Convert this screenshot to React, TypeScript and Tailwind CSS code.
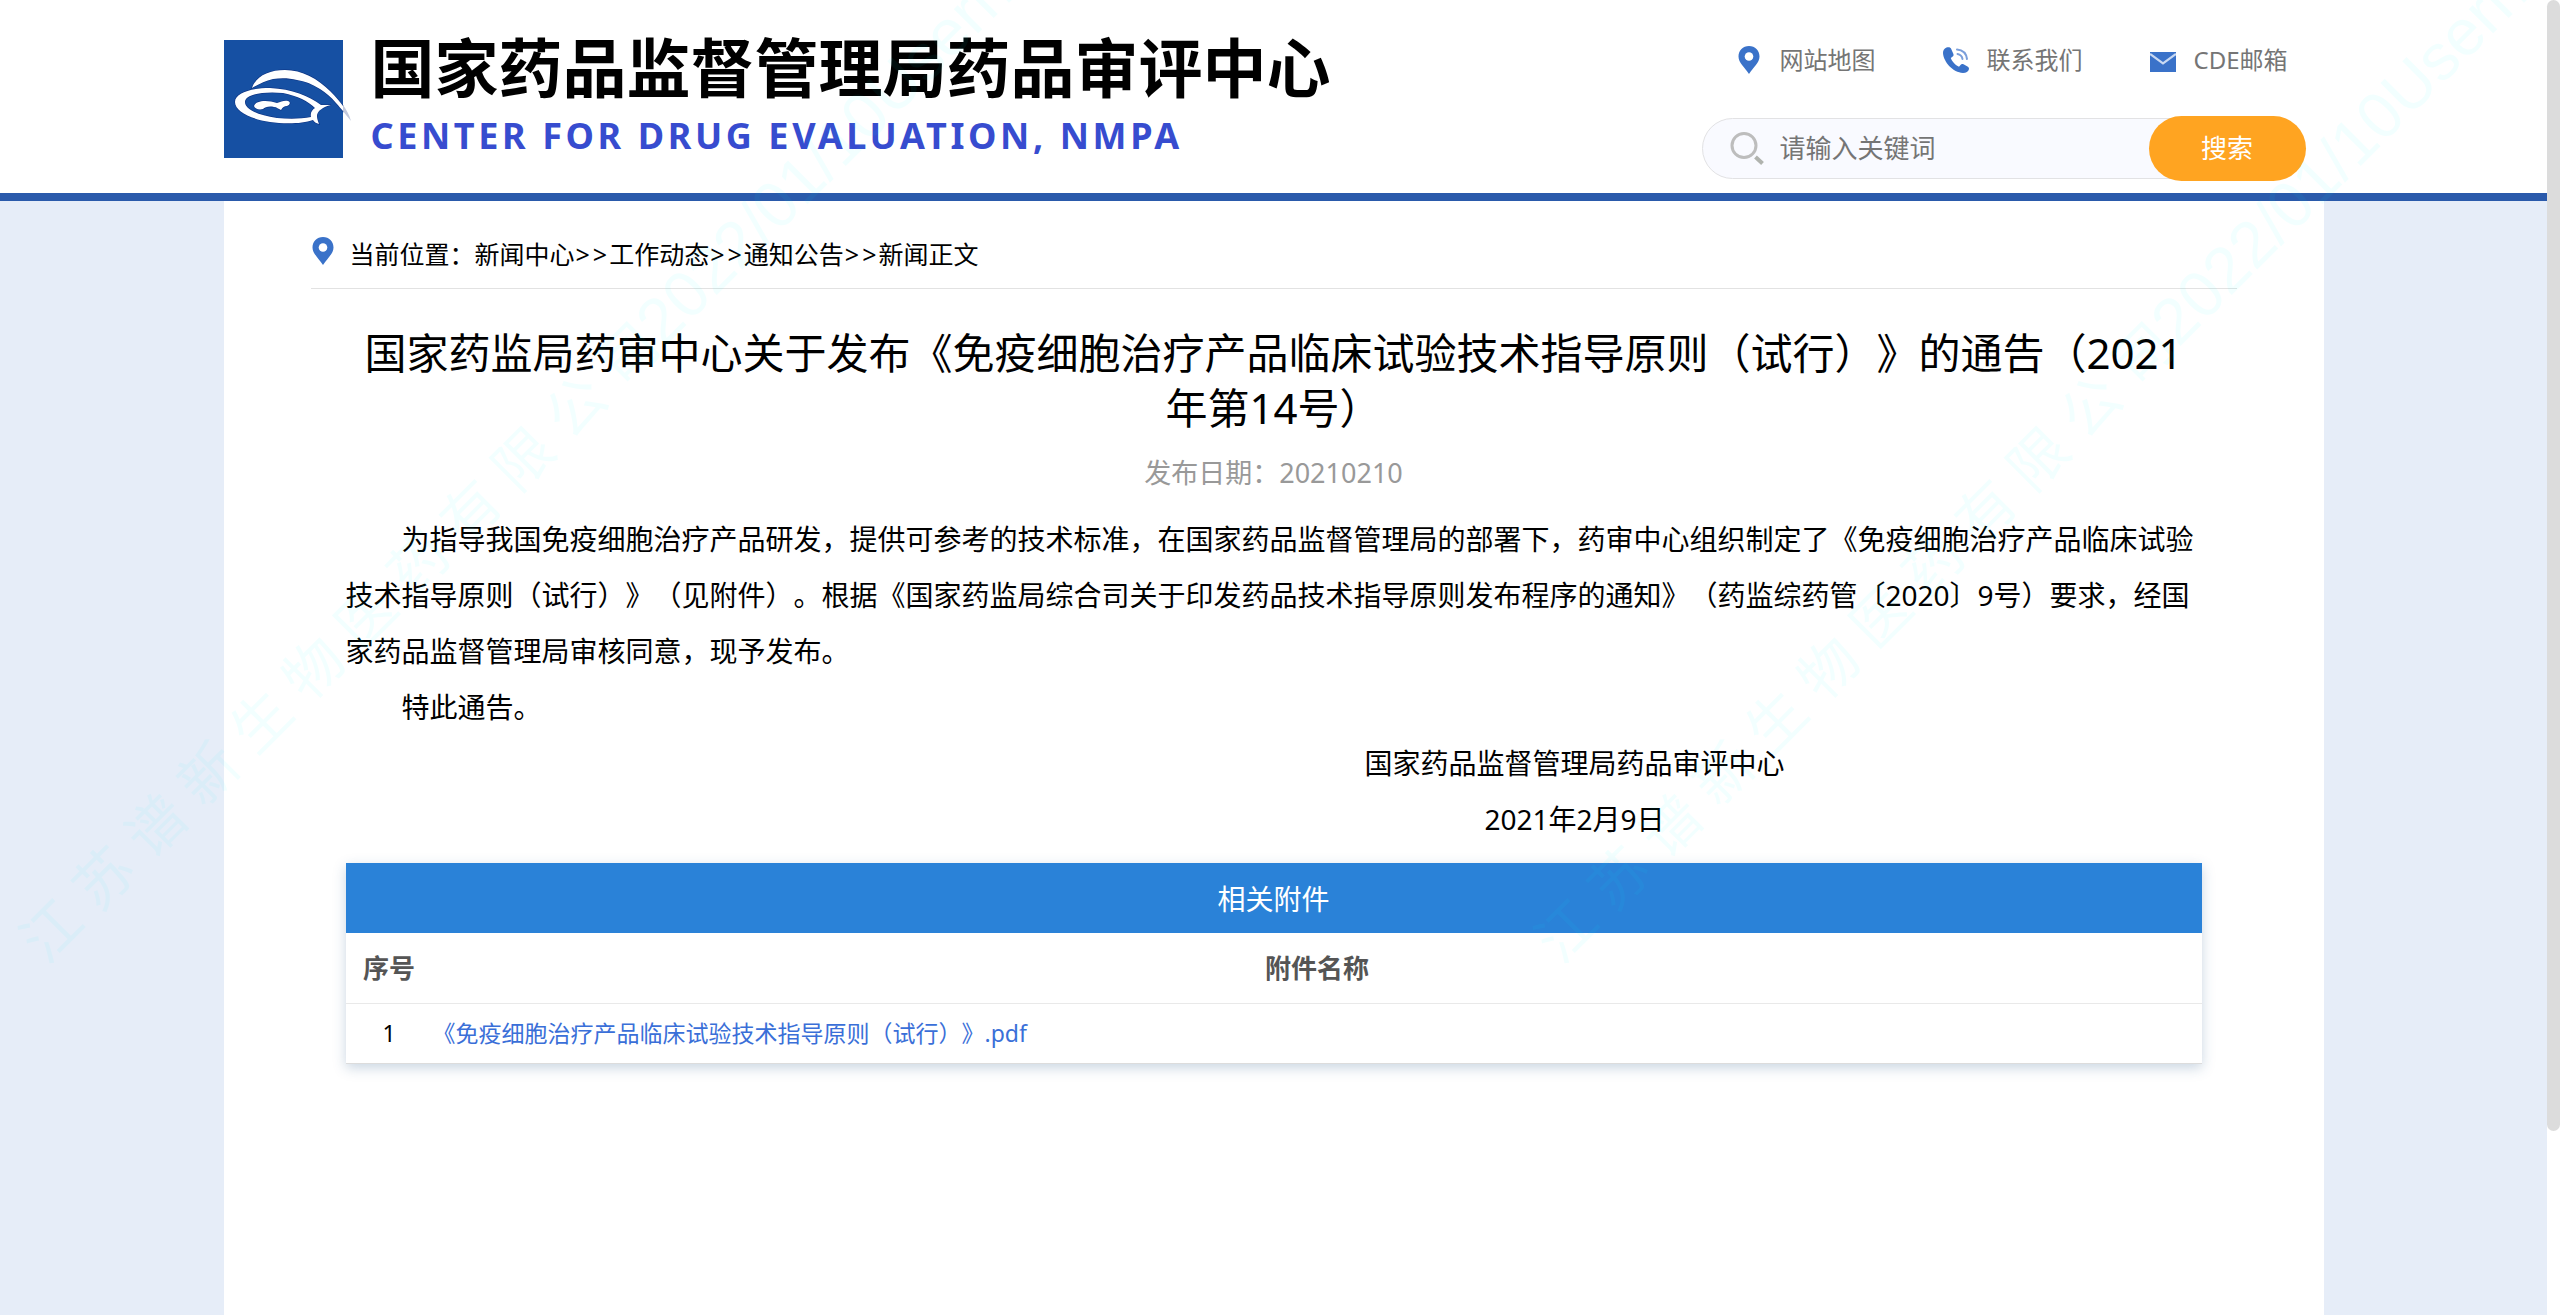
import React, { useState } from 'react';

// Types
interface Attachment {
    id: number;
    name: string;
}

interface QuickLink {
    label: string;
    icon: React.ReactNode;
}

const WATERMARK_COMPANY = '江 苏 谱 新 生 物 医 药 有 限 公 司';
const WATERMARK_SUFFIX = '2022/01/10Username';

const breadcrumbs = ['新闻中心', '工作动态', '通知公告', '新闻正文'];

const attachments: Attachment[] = [
    { id: 1, name: '《免疫细胞治疗产品临床试验技术指导原则（试行）》.pdf' },
];

// Icons
const PinIcon = ({ className }: { className?: string }) => (
    <svg viewBox="0 0 22 28" className={className} aria-hidden="true">
        <path
            d="M11 0C4.9 0 0.5 4.6 0.5 10.4C0.5 16.6 6.5 21 11 28C15.500 21 21.500 16.600 21.500 10.400C21.500 4.600 17.100 0 11 0Z"
            fill="#3a72c9"
        />
        <circle cx="11" cy="10.500" r="4.300" fill="#fff" />
    </svg>
);

const PhoneIcon = () => (
    <svg viewBox="0 0 26 26" className="h-[26px] w-[26px]" aria-hidden="true">
        <path
            d="M3.500 0.500C1 1.500 0 3.500 0 6C0.500 15 10 25.500 20 26C23 26 25.500 24.500 26 22C26 21 25.500 20.300 24.500 19.600L20.500 17.300C19.300 16.700 18.300 17 17.500 18L16 19.700C12.500 18.300 8.800 14.300 7.800 11L9.700 9.500C10.500 8.800 10.800 8 10.300 6.800L8 1.500C7.300 0.300 5.500 -0.200 3.500 0.500Z"
            fill="#3a72c9"
        />
        <g fill="none" stroke="#7b9fdb" strokeWidth="2" strokeLinecap="round">
            <path d="M14 2.500C19.500 3 23.300 6.500 24 12" />
            <path d="M14.500 7C17.300 7.500 19 9.200 19.500 12" />
        </g>
    </svg>
);

const MailIcon = () => (
    <svg viewBox="0 0 26 20" className="mt-1 h-5 w-[26px]" aria-hidden="true">
        <rect width="26" height="20" fill="#3a72c9" />
        <path d="M0 2L13 11.500L26 2" fill="none" stroke="#c9d9f2" strokeWidth="2.200" />
    </svg>
);

const SearchIcon = () => (
    <svg viewBox="0 0 34 33" className="h-[33px] w-[34px] shrink-0" aria-hidden="true">
        <circle cx="14" cy="13.500" r="12" fill="none" stroke="#bdbdbd" strokeWidth="3" />
        <path d="M25.500 25L32.500 31.500" stroke="#b0b3ae" strokeWidth="4" />
    </svg>
);

const Logo = () => (
    <svg viewBox="0 0 128 118" className="h-[118px] w-32 shrink-0" aria-label="CDE" role="img">
        <rect width="119" height="118" fill="#1650a3" />
        <g fill="#fff" stroke="#0d3282" strokeWidth="1.200" paintOrder="stroke">
            <path d="M28 48C32 36 45 30 61 30C78 30 94 39 106 51C112 57 116 62 119 66V71C117 69 115 66 112 63C107 57 102 53 96 49C88 44 81 41 73 40C65 38 57 38 49 39C41 41 35 44 28 48Z" />
            <path
                fillRule="evenodd"
                d="M11 62C11 53 27 48 46 48C68 49 85 56 97 65H107C99 67 93 71 93 76C93 79 94 81 95 84C92 83 90 82 89 80C78 84 60 84 46 82C26 79 11 71 11 62ZM21 62C21 69 33 75 53 78C65 79 77 79 87 77C86 73 88 70 91 68C84 61 74 56 59 53C37 51 21 55 21 62Z"
            />
            <path
                d="M30 66C32 60 44 60 53 63C57 62 60 60 64 61C67 62 66 65 63 66C60 66 59 67 57 70C54 69 53 67 50 67C45 66 41 67 39 69C35 70 31 69 30 66Z"
            />
        </g>
        <path d="M119 65C122 69 125 74 127 81C124 77 121 74 119 71Z" fill="#c3c9dc" />
    </svg>
);

const quickLinks: QuickLink[] = [
    { label: '网站地图', icon: <PinIcon className="h-7 w-[22px]" /> },
    { label: '联系我们', icon: <PhoneIcon /> },
    { label: 'CDE邮箱', icon: <MailIcon /> },
];

// Subcomponents
const SearchForm = () => {
    const [keyword, setKeyword] = useState('');

    return (
        <form className="flex items-center" onSubmit={(e) => e.preventDefault()}>
            <label
                htmlFor="keyword"
                className="-mr-10 flex h-[61px] min-w-0 flex-1 items-center gap-4 rounded-l-full border border-[#e2e2e4] bg-[#f9faff] pl-[27px]"
            >
                <SearchIcon />
                <input
                    id="keyword"
                    type="text"
                    value={keyword}
                    placeholder="请输入关键词"
                    aria-label="请输入关键词"
                    className="w-full min-w-0 bg-transparent pr-12 text-[26px] text-[#333] outline-none placeholder:text-[#757575]"
                    onChange={(e) => setKeyword(e.target.value)}
                />
            </label>
            <button
                type="submit"
                className="relative h-[65px] w-[157px] rounded-full bg-[#ffa421] text-[26px] text-white"
            >
                搜索
            </button>
        </form>
    );
};

const Header = () => (
    <header className="border-b-8 border-[#2a5aab] bg-white">
        <div className="mx-auto flex h-[193px] w-full max-w-[2100px] justify-between pr-[18px]">
            <div className="flex gap-[19px] pt-10">
                <Logo />
                <div className="whitespace-nowrap font-bold">
                    <div className="-mt-1 text-[64px] leading-[64px] text-black">国家药品监督管理局药品审评中心</div>
                    <div className="mt-4 text-4xl leading-10 tracking-widest text-[#374ccf]">
                        CENTER FOR DRUG EVALUATION, NMPA
                    </div>
                </div>
            </div>
            <div className="w-[604px] pt-[42px]">
                <nav className="flex gap-[67px] pl-[34px]">
                    {quickLinks.map((link) => (
                        <a
                            key={link.label}
                            href="#"
                            className="flex items-center gap-[18px] whitespace-nowrap text-2xl leading-9 text-[#757575]"
                        >
                            <span className="flex w-[26px] justify-center">{link.icon}</span>
                            {link.label}
                        </a>
                    ))}
                </nav>
                <div className="mt-[38px]">
                    <SearchForm />
                </div>
            </div>
        </div>
    </header>
);

const Breadcrumb = () => (
    <nav className="flex h-[88px] items-center gap-4 border-b border-[#e2e2e2] pl-px pt-5 text-[25px] text-black">
        <PinIcon className="-mt-2 h-7 w-[22px]" />
        <div>
            当前位置：
            {breadcrumbs.map((item, index) => (
                <React.Fragment key={item}>
                    {index > 0 && (
                        <>
                            <span className="pl-px pr-0.5">&gt;</span>
                            <span className="pl-px pr-0.5">&gt;</span>
                        </>
                    )}
                    <a href="#">{item}</a>
                </React.Fragment>
            ))}
        </div>
    </nav>
);

const AttachmentTable = () => (
    <div className="mt-4 shadow-[0_4px_12px_rgba(42,90,140,0.25)]">
        <table className="w-full border-collapse border-b border-[#dcdcdc]">
            <caption className="h-[70px] bg-[#2a82d8] text-[28px] leading-[72px] text-white">相关附件</caption>
            <thead>
                <tr className="h-[70px] border-b border-[#e9e9e9] text-[26px] text-[#555]">
                    <th className="w-[87px] pt-0.5 font-bold">序号</th>
                    <th className="pt-0.5 font-bold">附件名称</th>
                </tr>
            </thead>
            <tbody>
                {attachments.map((file) => (
                    <tr key={file.id} className="h-[60px] text-[23px]">
                        <td className="text-center text-black">{file.id}</td>
                        <td>
                            <a href="#" className="text-[#3a6fd8]">{file.name}</a>
                        </td>
                    </tr>
                ))}
            </tbody>
        </table>
    </div>
);

const Article = () => (
    <article className="px-[35px] pt-9 text-black">
        <h1 className="text-center text-[42px] leading-[55px]">
            国家药监局药审中心关于发布《免疫细胞治疗产品临床试验技术指导原则（试行）》的通告（2021年第14号）
        </h1>
        <p className="mt-5 text-center text-[27px] leading-9 text-[#999]">发布日期：20210210</p>
        <div className="mt-5 text-[28px] leading-[56px]">
            <p className="indent-[2em]">
                为指导我国免疫细胞治疗产品研发，提供可参考的技术标准，在国家药品监督管理局的部署下，药审中心组织制定了《免疫细胞治疗产品临床试验技术指导原则（试行）》（见附件）。根据《国家药监局综合司关于印发药品技术指导原则发布程序的通知》（药监综药管〔2020〕9号）要求，经国家药品监督管理局审核同意，现予发布。
            </p>
            <p className="indent-[2em]">特此通告。</p>
            <div className="pl-[602px] text-center">
                <p>国家药品监督管理局药品审评中心</p>
                <p>2021年2月9日</p>
            </div>
        </div>
        <AttachmentTable />
    </article>
);

const Watermark = ({ className }: { className: string }) => (
    <div
        className={`absolute origin-left -rotate-45 whitespace-nowrap font-['Liberation_Sans','Noto_Sans_CJK_SC',sans-serif] text-[65px] leading-[60px] text-[#00ffff]/5 ${className}`}
    >
        <span className="text-[58px]">{WATERMARK_COMPANY}</span>
        {WATERMARK_SUFFIX}
    </div>
);

const App = () => (
    <div className="relative flex min-h-screen overflow-hidden bg-white font-['Noto_Sans','Noto_Sans_CJK_SC',sans-serif] [text-spacing-trim:space-all]">
        <div className="flex min-w-0 flex-1 flex-col bg-[#e6edf8]">
            <Header />
            <main className="mx-auto w-full max-w-[2100px] flex-1 bg-white px-[87px]">
                <Breadcrumb />
                <Article />
            </main>
        </div>
        <div className="w-[13px] shrink-0">
            <div className="h-[86vh] rounded-full bg-[#dcdcdc]" />
        </div>
        <div className="pointer-events-none absolute inset-0 select-none overflow-hidden" aria-hidden="true">
            <Watermark className="left-[31px] top-[920px]" />
            <Watermark className="left-[1546px] top-[920px]" />
        </div>
    </div>
);

export default App;
